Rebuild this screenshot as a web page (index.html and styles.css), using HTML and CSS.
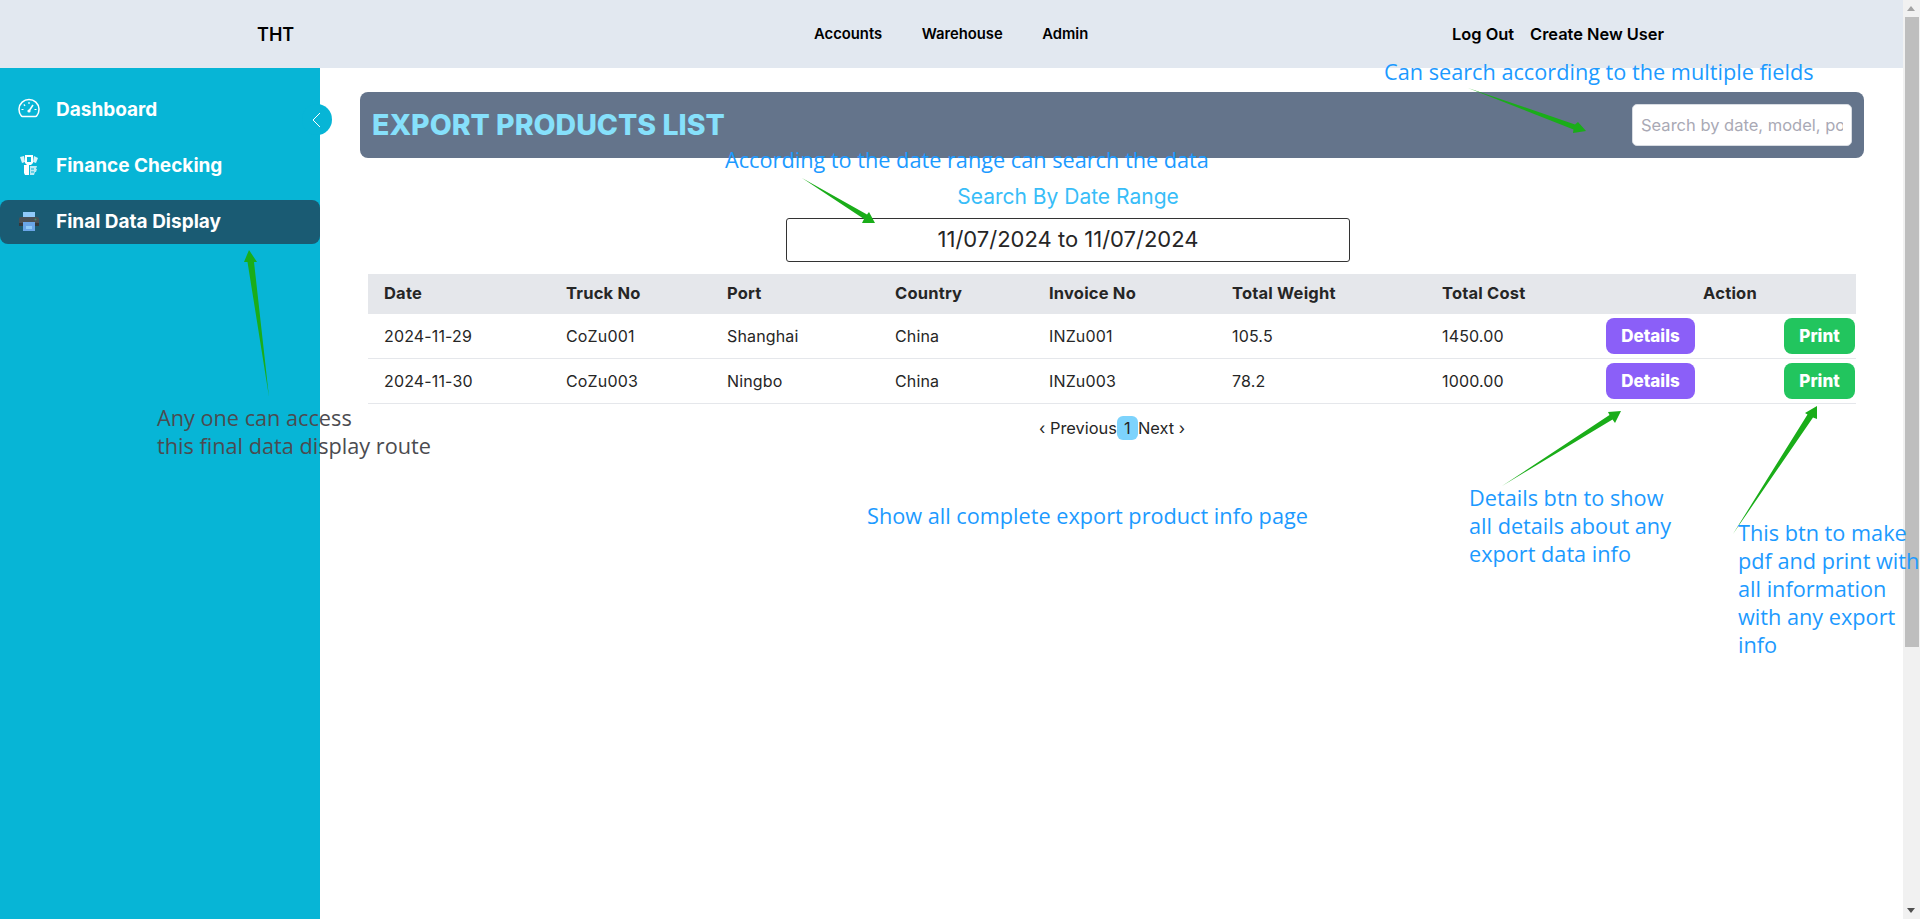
FILE: index.html
```html
<!DOCTYPE html>
<html lang="en">
<head>
<meta charset="utf-8">
<title>Export Products List</title>
<link rel="stylesheet" href="styles.css">
</head>
<body>
<div class="window">
  <div class="page">
    <header class="topbar">
      <div class="brand">THT</div>
      <nav class="nav-main"><a>Accounts</a><a>Warehouse</a><a>Admin</a></nav>
      <nav class="nav-auth"><a>Log Out</a><a>Create New User</a></nav>
    </header>
    <div class="body-row">
      <aside class="sidebar">
        <div class="toggle"><svg width="10" height="16" viewBox="0 0 10 16"><path d="M8 1 L1 8 L8 15" fill="none" stroke="#fff" stroke-width="1"/></svg></div>
        <a class="side-item">
          <svg class="side-icon" viewBox="0 0 22 20"><path d="M4.5 17.5h13a1.5 1.5 0 0 0 1.3-.8A10 10 0 1 0 3.2 16.7a1.5 1.5 0 0 0 1.3.8z" fill="none" stroke="#fff" stroke-width="1.5"/><path d="M11 12 L15 6" stroke="#fff" stroke-width="1.5"/><circle cx="11" cy="12" r="1.6" fill="#fff"/><path d="M3.5 10.5h2M16.5 10.5h2M5.8 5.5l1.3 1.3M11 3v2" stroke="#fff" stroke-width="1.2"/></svg>
          <span>Dashboard</span>
        </a>
        <a class="side-item">
          <svg class="side-icon" viewBox="0 0 22 22"><path d="M2 3l4-1 1 6-3 1zM16 2l4 2-2 5-3-1z" fill="#d8f4fa"/><path d="M7 1h8v8l-2 2H9L7 9z" fill="#fff"/><path d="M9 3h4v5H9z" fill="#07b5d6"/><path d="M6 11h5v10H7l-1-2z" fill="#fff"/><path d="M12 12h7l-1 3h1l-1 3h-1l-1 3h-4z" fill="#bdeaf4"/><path d="M13 15h3M13 18h3" stroke="#07b5d6"/></svg>
          <span>Finance Checking</span>
        </a>
        <a class="side-item active">
          <svg class="side-icon" viewBox="0 0 22 20"><path d="M5 1h12v6H5z" fill="#90caf9"/><path d="M3 6h16a2 2 0 0 1 2 2v7H1V8a2 2 0 0 1 2-2z" fill="#4a5055"/><path d="M1 12h20v3H1z" fill="#33383c"/><path d="M5 11h12v9H5z" fill="#6aa5e8"/><path d="M8 15h6v3H8z" fill="#90caf9"/><circle cx="17.5" cy="8.5" r="1" fill="#3b8f6a"/></svg>
          <span>Final Data Display</span>
        </a>
      </aside>
      <main class="content">
        <section class="title-panel">
          <h1>EXPORT PRODUCTS LIST</h1>
          <input class="search" type="text" placeholder="Search by date, model, port">
        </section>
        <section class="date-range">
          <label>Search By Date Range</label>
          <div class="date-box">11/07/2024 to 11/07/2024</div>
        </section>
        <table class="data-table">
          <colgroup>
            <col class="c-date"><col class="c-truck"><col class="c-port"><col class="c-country"><col class="c-invoice"><col class="c-weight"><col class="c-cost"><col class="c-action">
          </colgroup>
          <thead>
            <tr><th>Date</th><th>Truck No</th><th>Port</th><th>Country</th><th>Invoice No</th><th>Total Weight</th><th>Total Cost</th><th class="action-head">Action</th></tr>
          </thead>
          <tbody>
            <tr><td>2024-11-29</td><td>CoZu001</td><td>Shanghai</td><td>China</td><td>INZu001</td><td>105.5</td><td>1450.00</td><td class="actions"><div class="action-row"><button class="btn btn-details">Details</button><button class="btn btn-print">Print</button></div></td></tr>
            <tr><td>2024-11-30</td><td>CoZu003</td><td>Ningbo</td><td>China</td><td>INZu003</td><td>78.2</td><td>1000.00</td><td class="actions"><div class="action-row"><button class="btn btn-details">Details</button><button class="btn btn-print">Print</button></div></td></tr>
          </tbody>
        </table>
        <div class="pager"><span>‹ Previous</span><span class="page-num">1</span><span>Next ›</span></div>
      </main>
    </div>
  </div>
  <div class="scrollbar">
    <div class="sb-up"></div>
    <div class="sb-track"><div class="sb-thumb"></div></div>
    <div class="sb-down"></div>
  </div>
</div>

<div class="notes">
  <svg class="arrows" width="1920" height="919" viewBox="0 0 1920 919">
    <path d="M1468 88 L1575 124.5 L1578 122 L1586 131 L1573 133 L1573.5 129.5 Z"/>
    <path d="M802 178 L867 214.5 L869 212 L875 223 L862 223 L864 219 Z"/>
    <path d="M269 397 L247.5 262 L244 262 L249 250 L257 262 L254 262 Z"/>
    <path d="M1502 486 L1609.5 415 L1608 412 L1621 411 L1615 423 L1612.5 419.5 Z"/>
    <path d="M1733 534 L1807.5 414.5 L1805 413 L1817 406 L1817 419 L1813 417.5 Z"/>
  </svg>
  <div class="note note-search">Can search according to the multiple fields</div>
  <div class="note note-date">According to the date range can search the data</div>
  <div class="note note-access">Any one can access<br>this final data display route</div>
  <div class="note note-page">Show all complete export product info page</div>
  <div class="note note-details">Details btn to show<br>all details about any<br>export data info</div>
  <div class="note note-print">This btn to make<br>pdf and print with<br>all information<br>with any export<br>info</div>
</div>
</body>
</html>
```

FILE: styles.css
```css
* { box-sizing: border-box; }
html, body { margin: 0; height: 919px; overflow: hidden; background: #fff; }
body { font-family: "Inter", "Open Sans", sans-serif; color: #262626; position: relative; }

.window { display: flex; width: 1920px; height: 919px; }
.page { flex: 1; min-width: 0; display: flex; flex-direction: column; }

.topbar { height: 68px; background: #e2e8f0; display: grid; grid-template-columns: 557px 638px 1fr; align-items: center; padding-left: 257px; color: #000; }
.brand { font-size: 18px; font-weight: 600; }
.nav-main { display: flex; gap: 39.5px; font-size: 14.8px; font-weight: 600; }
.nav-auth { display: flex; gap: 16px; font-size: 16.4px; font-weight: 600; }

.body-row { flex: 1; display: flex; min-height: 0; }
.sidebar { width: 320px; background: #07b5d6; padding-top: 20px; position: relative; color: #fff; }
.toggle { position: absolute; left: 302px; top: 36px; width: 30px; height: 31px; border-radius: 50%; background: #07b5d6; display: flex; align-items: center; padding-left: 10px; }
.side-item { display: flex; align-items: center; height: 44px; margin-bottom: 12px; padding: 0 0 2px 18px; font-size: 19px; font-weight: 700; border-radius: 8px; position: relative; }
.side-item span { margin-left: 16px; }
.side-icon { width: 22px; height: 22px; flex: none; }
.side-item.active { background: #1a5b73; }

.content { flex: 1; min-width: 0; padding: 24px 39px 0 40px; }
.title-panel { height: 66px; background: #64748b; border-radius: 8px; display: flex; align-items: center; justify-content: space-between; padding: 0 12px; }
.title-panel h1 { margin: 0 0 2px; font-size: 28.5px; font-weight: 800; color: #86e0fb; }
.search { width: 220px; height: 42px; border: 1px solid #d8dce2; border-radius: 5px; padding: 0 8px; font: 400 16.5px "Inter", sans-serif; background: #fff; }
.search::placeholder { color: #a9a9b5; opacity: 1; }

.date-range { display: flex; flex-direction: column; align-items: center; padding: 27px 88px 0 0; }
.date-range label { font-size: 21px; line-height: 24px; color: #38bdf8; margin-bottom: 9px; }
.date-box { width: 564px; height: 44px; border: 1px solid #333; border-radius: 3px; padding-bottom: 2px; display: flex; align-items: center; justify-content: center; font-size: 22px; color: #262626; }

.data-table { margin: 12px 8px 0 8px; width: 1488px; border-collapse: separate; border-spacing: 0; table-layout: fixed; font-size: 16px; letter-spacing: .15px; }
.c-date { width: 182px; } .c-truck { width: 161px; } .c-port { width: 168px; } .c-country { width: 154px; }
.c-invoice { width: 183px; } .c-weight { width: 210px; } .c-cost { width: 178px; } .c-action { width: 252px; }
.data-table th { height: 40px; background: #e5e7eb; text-align: left; padding: 0 16px 2px; font-size: 16.5px; font-weight: 700; letter-spacing: .2px; }
.data-table td { height: 45px; padding: 0 16px 1px; border-bottom: 1px solid #e5e7eb; }
.data-table th.action-head { text-align: center; padding: 0 0 2px; }
.data-table td.actions { padding: 0 1px 0 2px; }
.action-row { display: flex; justify-content: space-between; }
.btn { height: 36px; border: 0; border-radius: 8px; color: #fff; font: 800 17px "Inter", sans-serif; }
.btn-details { width: 89px; background: #8b5ff8; }
.btn-print { width: 71px; background: #22c55e; }

.pager { display: flex; justify-content: center; align-items: center; margin: 12px 0 0 0; font-size: 16.4px; height: 24px; }
.page-num { width: 21px; height: 24px; background: #7dd3fc; border-radius: 6px; display: flex; align-items: center; justify-content: center; }

.scrollbar { width: 17px; flex: none; background: #f1f1f1; display: flex; flex-direction: column; }
.sb-up, .sb-down { height: 17px; position: relative; }
.sb-up::after, .sb-down::after { content: ""; position: absolute; left: 4px; top: 6px; border-left: 4px solid transparent; border-right: 4px solid transparent; }
.sb-up::after { border-bottom: 5px solid #a3a3a3; }
.sb-down::after { border-top: 5px solid #505050; }
.sb-track { flex: 1; }
.sb-thumb { height: 630px; margin: 0 1px 0 2px; background: #bebebe; }

.notes { position: absolute; inset: 0; pointer-events: none; }
.arrows { position: absolute; left: 0; top: 0; }
.arrows path { fill: #1aad19; }
.note { position: absolute; font-family: "Open Sans", "Noto Sans", sans-serif; font-size: 21.7px; line-height: 28px; color: #1c9aff; white-space: nowrap; }
.note-search { left: 1384px; top: 58px; }
.note-date { left: 725px; top: 146px; }
.note-access { left: 157px; top: 404px; color: #4b4b50; }
.note-page { left: 867px; top: 502px; }
.note-details { left: 1469px; top: 484px; }
.note-print { left: 1738px; top: 519px; }
```
